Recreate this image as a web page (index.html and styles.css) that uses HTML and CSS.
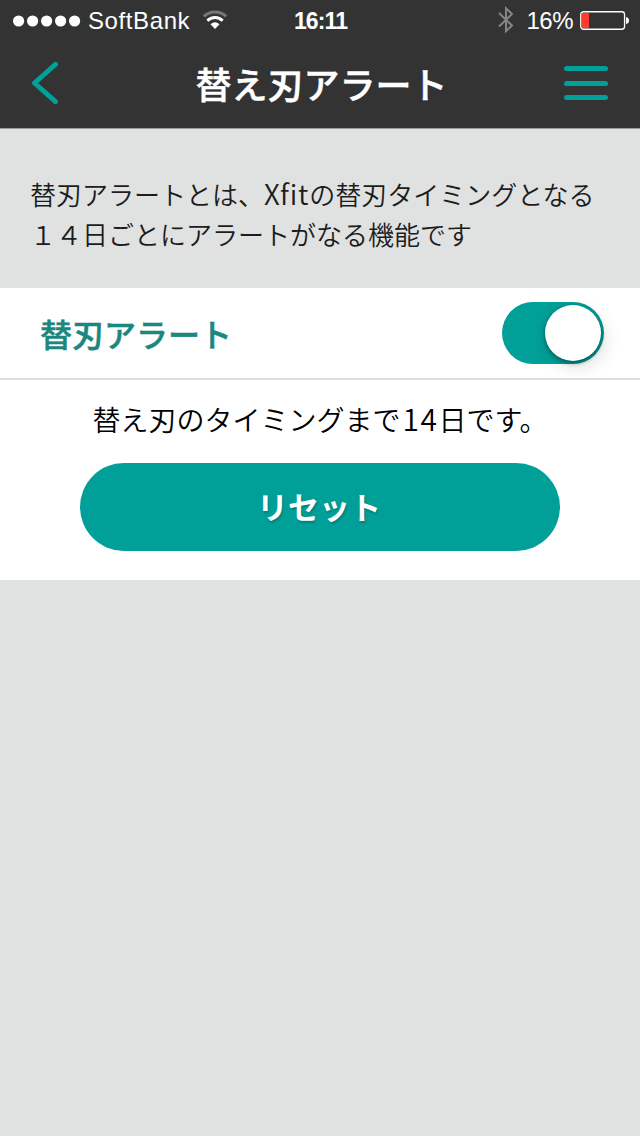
FILE: index.html
```html
<!DOCTYPE html>
<html lang="ja">
<head>
<meta charset="utf-8">
<title>替え刃アラート</title>
<link rel="stylesheet" href="styles.css">
</head>
<body>
<header class="top">
  <div class="status">
    <div class="status-left">
      <svg class="signal" width="68" height="12" viewBox="0 0 68 12"><g fill="#fff"><circle cx="5.6" cy="6" r="5.6"/><circle cx="19.6" cy="6" r="5.6"/><circle cx="33.6" cy="6" r="5.6"/><circle cx="47.6" cy="6" r="5.6"/><circle cx="61.6" cy="6" r="5.6"/></g></svg>
      <span class="carrier">SoftBank</span>
      <svg class="wifi" width="26" height="20" viewBox="0 0 26 20" fill="none"><path d="M1.800 6.400C8 .6 18 .6 24.200 6.400" stroke="#777" stroke-width="3"/><path d="M5.400 10.700C9.600 6.300 16.400 6.300 20.600 10.700" stroke="#fff" stroke-width="3"/><path d="M8.500 14.200Q13 10.400 17.500 14.200L13 18.900Z" fill="#fff"/></svg>
    </div>
    <span class="clock">16:11</span>
    <div class="status-right">
      <svg class="bluetooth" width="16" height="28" viewBox="0 0 16 28" fill="none" stroke="#858585" stroke-width="2"><path d="M1 7L14 19.500L8 25.200V2.300L14 8L1 20.500"/></svg>
      <span class="percent">16%</span>
      <svg class="battery" width="50" height="20" viewBox="0 0 50 20"><rect x=".75" y=".75" width="43.800" height="17.500" rx="2.800" fill="none" stroke="#fff" stroke-width="1.300"/><path d="M2 2H9V17H2Z" fill="#ff3b30"/><path d="M46 6Q49 6.500 49 9.500T46 13Z" fill="#fff"/></svg>
    </div>
  </div>
  <nav class="bar">
    <svg class="back" width="28" height="44" viewBox="0 0 28 44"><path d="M24.500 3.300L3.500 22L24.500 40.700" fill="none" stroke="#009f98" stroke-width="5" stroke-linecap="round" stroke-linejoin="round"/></svg>
    <h1 class="title">替え刃アラート</h1>
    <div class="menu"><i></i><i></i><i></i></div>
  </nav>
</header>
<p class="intro">替刃アラートとは、<span class="latin">Xfit</span>の替刃タイミングとなる<br>１４日ごとにアラートがなる機能です</p>
<main class="panel">
  <div class="row"><span class="label">替刃アラート</span><div class="switch"><div class="knob"></div></div></div>
  <div class="detail">
    <p class="message">替え刃のタイミングまで<span class="days">14</span>日です。</p>
    <button class="reset">リセット</button>
  </div>
</main>
</body>
</html>
```
FILE: styles.css
```css
* { box-sizing: border-box; }
body {
  margin: 0;
  width: 640px;
  min-height: 1136px;
  background: #dfe2e1;
  font-family: "Noto Sans CJK JP", sans-serif;
}
.top { height: 129px; background: #333; border-bottom: 1px solid #999; color: #fff; }
.status {
  height: 40px;
  display: grid;
  grid-template-columns: 1fr auto 1fr;
  align-items: center;
  padding: 1px 10px 0 13px;
  font: 24px/40px "Liberation Sans", Arial, sans-serif;
}
.status-left, .status-right { display: flex; align-items: center; height: 40px; }
.status-right { justify-content: flex-end; }
.carrier { margin-left: 7px; width: 103px; letter-spacing: .6px; }
.wifi { margin: 0 0 2px 11px; }
.bluetooth { margin-bottom: 2px; }
.clock { padding-right: 2px; font-weight: bold; font-size: 23px; letter-spacing: -.9px; }
.percent { margin: 0 7px 0 12px; letter-spacing: -.5px; }
.bar { height: 88px; display: grid; grid-template-columns: 44px 1fr 44px; align-items: center; padding: 0 32px 2px 31px; }
.title { margin: 0; padding: 0 0 1px 4px; font-size: 36px; font-weight: 500; line-height: 52px; text-align: center; -webkit-text-stroke: .5px #fff; }
.menu { width: 44px; height: 34px; display: flex; flex-direction: column; justify-content: space-between; }
.menu i { height: 5px; border-radius: 3px; background: #009f98; }
.intro {
  margin: 0;
  height: 159px;
  padding: 45px 30px 0;
  font-size: 26px;
  font-weight: 350;
  line-height: 40px;
  white-space: nowrap;
  color: #1c1c1c;
}
.latin { font-size: 28px; line-height: 1; letter-spacing: .8px; }
.panel { height: 292px; background: #fff; }
.row { height: 92px; border-bottom: 2px solid #dfe0e0; display: flex; align-items: center; justify-content: space-between; padding: 0 36px 0 40px; }
.label { padding-bottom: 1px; font-size: 32px; font-weight: 500; color: #1c877f; -webkit-text-stroke: .5px #1c877f; }
.switch { width: 102px; height: 62px; border-radius: 31px; background: #009f98; padding: 3px; display: flex; justify-content: flex-end; }
.knob { width: 56px; height: 56px; border-radius: 50%; background: #fff; box-shadow: 0 2px 5px rgba(0,0,0,.4), 4px 6px 18px rgba(0,0,0,.12); }
.detail { display: flex; flex-direction: column; align-items: center; padding-top: 18px; }
.message { margin: 0; font-size: 28px; font-weight: 350; line-height: 42px; color: #000; white-space: nowrap; }
.days { margin-left: 2px; font-size: 30px; line-height: 1; letter-spacing: 1.5px; }
.reset {
  margin-top: 23px;
  width: 480px;
  height: 88px;
  border: 0;
  border-radius: 44px;
  background: #009f98;
  color: #fff;
  padding: 0 2px 3px 0;
  font: 700 31px/44px "Noto Sans CJK JP", sans-serif;
  text-shadow: 1px 2px 2px rgba(0,0,0,.2);
}
```
